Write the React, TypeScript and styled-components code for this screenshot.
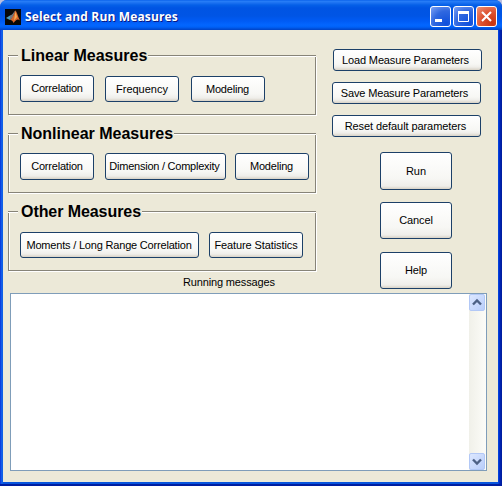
import React from "react";
import styled, { createGlobalStyle } from "styled-components";

const GlobalStyle = createGlobalStyle`
  * { box-sizing: border-box; }
  html, body { margin: 0; padding: 0; overflow: hidden; background: #b9bfe0; }
`;

const Window = styled.div`
  width: 502px;
  height: 486px;
  display: flex;
  flex-direction: column;
  border-radius: 7px 7px 0 0;
  background: linear-gradient(90deg, #0831d9 0, #166aee 2px, #0855dd 3px, #0855dd 498px, #0030d8 499px, #001ea0 501px);
  border-bottom: 2px solid #001ea0;
  font: 11px "Liberation Sans", Arial, sans-serif;
  color: #000;
`;

const TitleBar = styled.header`
  height: 30px;
  flex: none;
  display: flex;
  align-items: center;
  padding: 3px 5px 0;
  border-radius: 7px 7px 0 0;
  background: linear-gradient(
    #0058e6 0, #2a80f8 1px, #1a70f0 3px, #0560e8 5px, #0054e3 8px,
    #0055e5 16px, #005bf5 21px, #0366ff 25px, #0061f8 27px, #0042c4 30px
  );
`;

const Title = styled.h1`
  flex: 1;
  margin: 1px 0 0 4px;
  color: #fff;
  font: bold 12px/16px "Open Sans", "Trebuchet MS", sans-serif;
  letter-spacing: 0.14px;
  text-shadow: 1px 1px 0 #0a1883;
  white-space: nowrap;
`;

const Controls = styled.div`
  display: flex;
  gap: 2px;
`;

const ControlButton = styled.button<{ $close?: boolean }>`
  width: 21px;
  height: 21px;
  padding: 0;
  border: 1px solid #fff;
  border-radius: 3px;
  background: ${(p) =>
    p.$close
      ? "radial-gradient(circle at 80% 85%, #c83410, #dd5230 50%, #ee9378 100%)"
      : "radial-gradient(circle at 80% 85%, #0f50dc, #3068e0 55%, #7da2f5 100%)"};
  svg { display: block; }
`;

const Body = styled.main`
  height: 452px;
  margin: 0 4px 0 3px;
  background: #ece9d8;
`;

const Panels = styled.div`
  display: flex;
  height: 263px;
`;

const Groups = styled.div`
  width: 314px;
  padding: 17px 1px 0 5px;
`;

const Group = styled.section`
  height: 78px;
`;

const GroupHead = styled.div`
  height: 18px;
  display: flex;
  align-items: center;
`;

const Rule = styled.i<{ $width?: number }>`
  ${(p) => (p.$width ? `width: ${p.$width}px;` : "flex: 1;")}
  height: 2px;
  border-top: 1px solid #878478;
  border-bottom: 1px solid #fff;
`;

const GroupTitle = styled.h2<{ $width: number; $spacing: number }>`
  width: ${(p) => p.$width}px;
  margin: 0;
  padding-left: 3px;
  font: bold 16px/18px "Liberation Sans", Arial, sans-serif;
  letter-spacing: ${(p) => p.$spacing}px;
  white-space: nowrap;
`;

const GroupBody = styled.div<{ $gap: number }>`
  height: 59px;
  margin-top: -9px;
  padding: 19px 0 0 11px;
  display: flex;
  align-items: flex-start;
  gap: ${(p) => p.$gap}px;
  border: 1px solid #878478;
  border-top: 0;
  box-shadow: 1px 1px 0 #fff, inset 1px 0 0 #fff;
`;

const Button = styled.button<{
  $w: number; $h: number; $ml?: number; $mt?: number; $ls?: number; $right?: number; $lift?: number;
}>`
  flex: none;
  width: ${(p) => p.$w}px;
  height: ${(p) => p.$h}px;
  margin: ${(p) => p.$mt ?? 0}px 0 0 ${(p) => p.$ml ?? 0}px;
  padding: 0 ${(p) => p.$right ?? 0}px ${(p) => p.$lift ?? 0}px 0;
  border: 1px solid #1c4068;
  border-radius: 3px;
  background: linear-gradient(#fff, #f7f7f4 70%, #efeeea calc(100% - 3px), #d8d2c6);
  color: #000;
  font: 11px "Liberation Sans", Arial, sans-serif;
  letter-spacing: ${(p) => p.$ls ?? 0}px;
  white-space: nowrap;
`;

const Actions = styled.div`
  flex: 1;
  display: flex;
  flex-direction: column;
  align-items: flex-start;
  padding: 19px 0 0 15px;
`;

const Caption = styled.div`
  height: 13px;
  margin-top: -17px;
  padding-left: 180px;
  line-height: 13px;
  letter-spacing: -0.15px;
`;

const Messages = styled.div`
  width: 477px;
  height: 178px;
  margin: 4px 0 0 7px;
  display: flex;
  justify-content: flex-end;
  border: 1px solid #7f9db9;
  background: #fff;
`;

const ScrollTrack = styled.div`
  width: 17px;
  display: flex;
  flex-direction: column;
  justify-content: space-between;
  background: linear-gradient(90deg, #f0f0e9, #fcfcf8);
`;

const ScrollButton = styled.button`
  width: 16px;
  height: 17px;
  padding: 0;
  border: 1px solid #b2c8f6;
  border-radius: 2px;
  background: linear-gradient(135deg, #dce7ff, #b9cefa);
  svg { display: block; margin: auto; }
`;

const MatlabIcon = () => (
  <svg width="16" height="16" viewBox="0 0 16 16">
    <rect width="16" height="16" fill="#080808" />
    <path d="M1 9 5 6.5 7.5 8 5 11Z" fill="#4d9abb" />
    <path d="M5 6.5C7.5 6 8.5 3 10.5 1.5L7.5 9 5 11Z" fill="#6f7880" />
    <path d="M10.5 1.5C12 3 13.3 8.5 15 11.5 12.5 9.5 11 11 8.5 14 7.5 11.5 6.5 10.8 5 11 8 9 8.5 5 10.5 1.5Z" fill="#d9672b" />
    <path d="M10.4 2.5 12 8 9 11.5Z" fill="#f4ad55" />
  </svg>
);

const Chevron = ({ down = false }: { down?: boolean }) => (
  <svg width="14" height="15" viewBox="0 0 14 15">
    <path d={down ? "M3 5.5 7 9.5 11 5.5" : "M3 9.5 7 5.5 11 9.5"} fill="none" stroke="#4d6185" strokeWidth="2.4" />
  </svg>
);

interface MeasureButton { label: string; w: number; ml?: number; h: number; mt?: number; ls?: number; lift?: number; right?: number }
interface MeasureGroup {
  title: string; titleWidth: number; spacing: number; gap: number; buttons: MeasureButton[];
}

const groups: MeasureGroup[] = [
  {
    title: "Linear Measures", titleWidth: 130, spacing: 0, gap: 11,
    buttons: [
      { label: "Correlation", w: 74, h: 27, ls: -0.2, lift: 2 },
      { label: "Frequency", w: 74, h: 26, mt: 1 },
      { label: "Modeling", w: 74, h: 26, mt: 1, ml: 1, ls: -0.2, right: 1 },
    ],
  },
  {
    title: "Nonlinear Measures", titleWidth: 156, spacing: 0, gap: 9,
    buttons: [
      { label: "Correlation", w: 74, h: 27, ls: -0.2, lift: 2 },
      { label: "Dimension / Complexity", w: 121, h: 27, ml: 2, ls: -0.24, right: 2, lift: 2 },
      { label: "Modeling", w: 74, h: 27, ls: -0.2, lift: 2, right: 1 },
    ],
  },
  {
    title: "Other Measures", titleWidth: 124, spacing: -0.07, gap: 10,
    buttons: [
      { label: "Moments / Long Range Correlation", w: 179, h: 26, mt: 1, ls: -0.19, right: 1 },
      { label: "Feature Statistics", w: 94, h: 26, mt: 1, ls: -0.1 },
    ],
  },
];

export default function App() {
  return (
    <>
      <GlobalStyle />
      <Window>
        <TitleBar>
          <MatlabIcon />
          <Title>Select and Run Measures</Title>
          <Controls>
            <ControlButton aria-label="Minimize">
              <svg width="19" height="19"><path d="M4 13.5h7" stroke="#fff" strokeWidth="3" /></svg>
            </ControlButton>
            <ControlButton aria-label="Maximize">
              <svg width="19" height="19"><path d="M4.5 5v9.5h10V5" fill="none" stroke="#fff" /><path d="M4 5.5h11" stroke="#fff" strokeWidth="3" /></svg>
            </ControlButton>
            <ControlButton $close aria-label="Close">
              <svg width="19" height="19"><path d="m5 5 9 9m0-9-9 9" stroke="#fff" strokeWidth="2.1" /></svg>
            </ControlButton>
          </Controls>
        </TitleBar>
        <Body>
          <Panels>
            <Groups>
              {groups.map((g) => (
                <Group key={g.title}>
                  <GroupHead>
                    <Rule $width={10} />
                    <GroupTitle $width={g.titleWidth} $spacing={g.spacing}>{g.title}</GroupTitle>
                    <Rule />
                  </GroupHead>
                  <GroupBody $gap={g.gap}>
                    {g.buttons.map((b) => (
                      <Button key={b.label} $w={b.w} $h={b.h} $mt={b.mt} $ml={b.ml} $ls={b.ls} $lift={b.lift} $right={b.right}>
                        {b.label}
                      </Button>
                    ))}
                  </GroupBody>
                </Group>
              ))}
            </Groups>
            <Actions>
              <Button $w={149} $h={22} $ml={1} $ls={-0.15} $right={4}>Load Measure Parameters</Button>
              <Button $w={149} $h={22} $mt={11} $ls={-0.15} $right={4}>Save Measure Parameters</Button>
              <Button $w={149} $h={22} $mt={11} $ls={-0.08} $right={2}>Reset default parameters</Button>
              <Button $w={72} $h={38} $mt={15} $ml={48}>Run</Button>
              <Button $w={72} $h={37} $mt={12} $ml={48} $ls={-0.1} $lift={2}>Cancel</Button>
              <Button $w={72} $h={37} $mt={13} $ml={48} $ls={-0.1} $lift={2}>Help</Button>
            </Actions>
          </Panels>
          <Caption>Running messages</Caption>
          <Messages>
            <ScrollTrack>
              <ScrollButton aria-label="Scroll up"><Chevron /></ScrollButton>
              <ScrollButton aria-label="Scroll down"><Chevron down /></ScrollButton>
            </ScrollTrack>
          </Messages>
        </Body>
      </Window>
    </>
  );
}
